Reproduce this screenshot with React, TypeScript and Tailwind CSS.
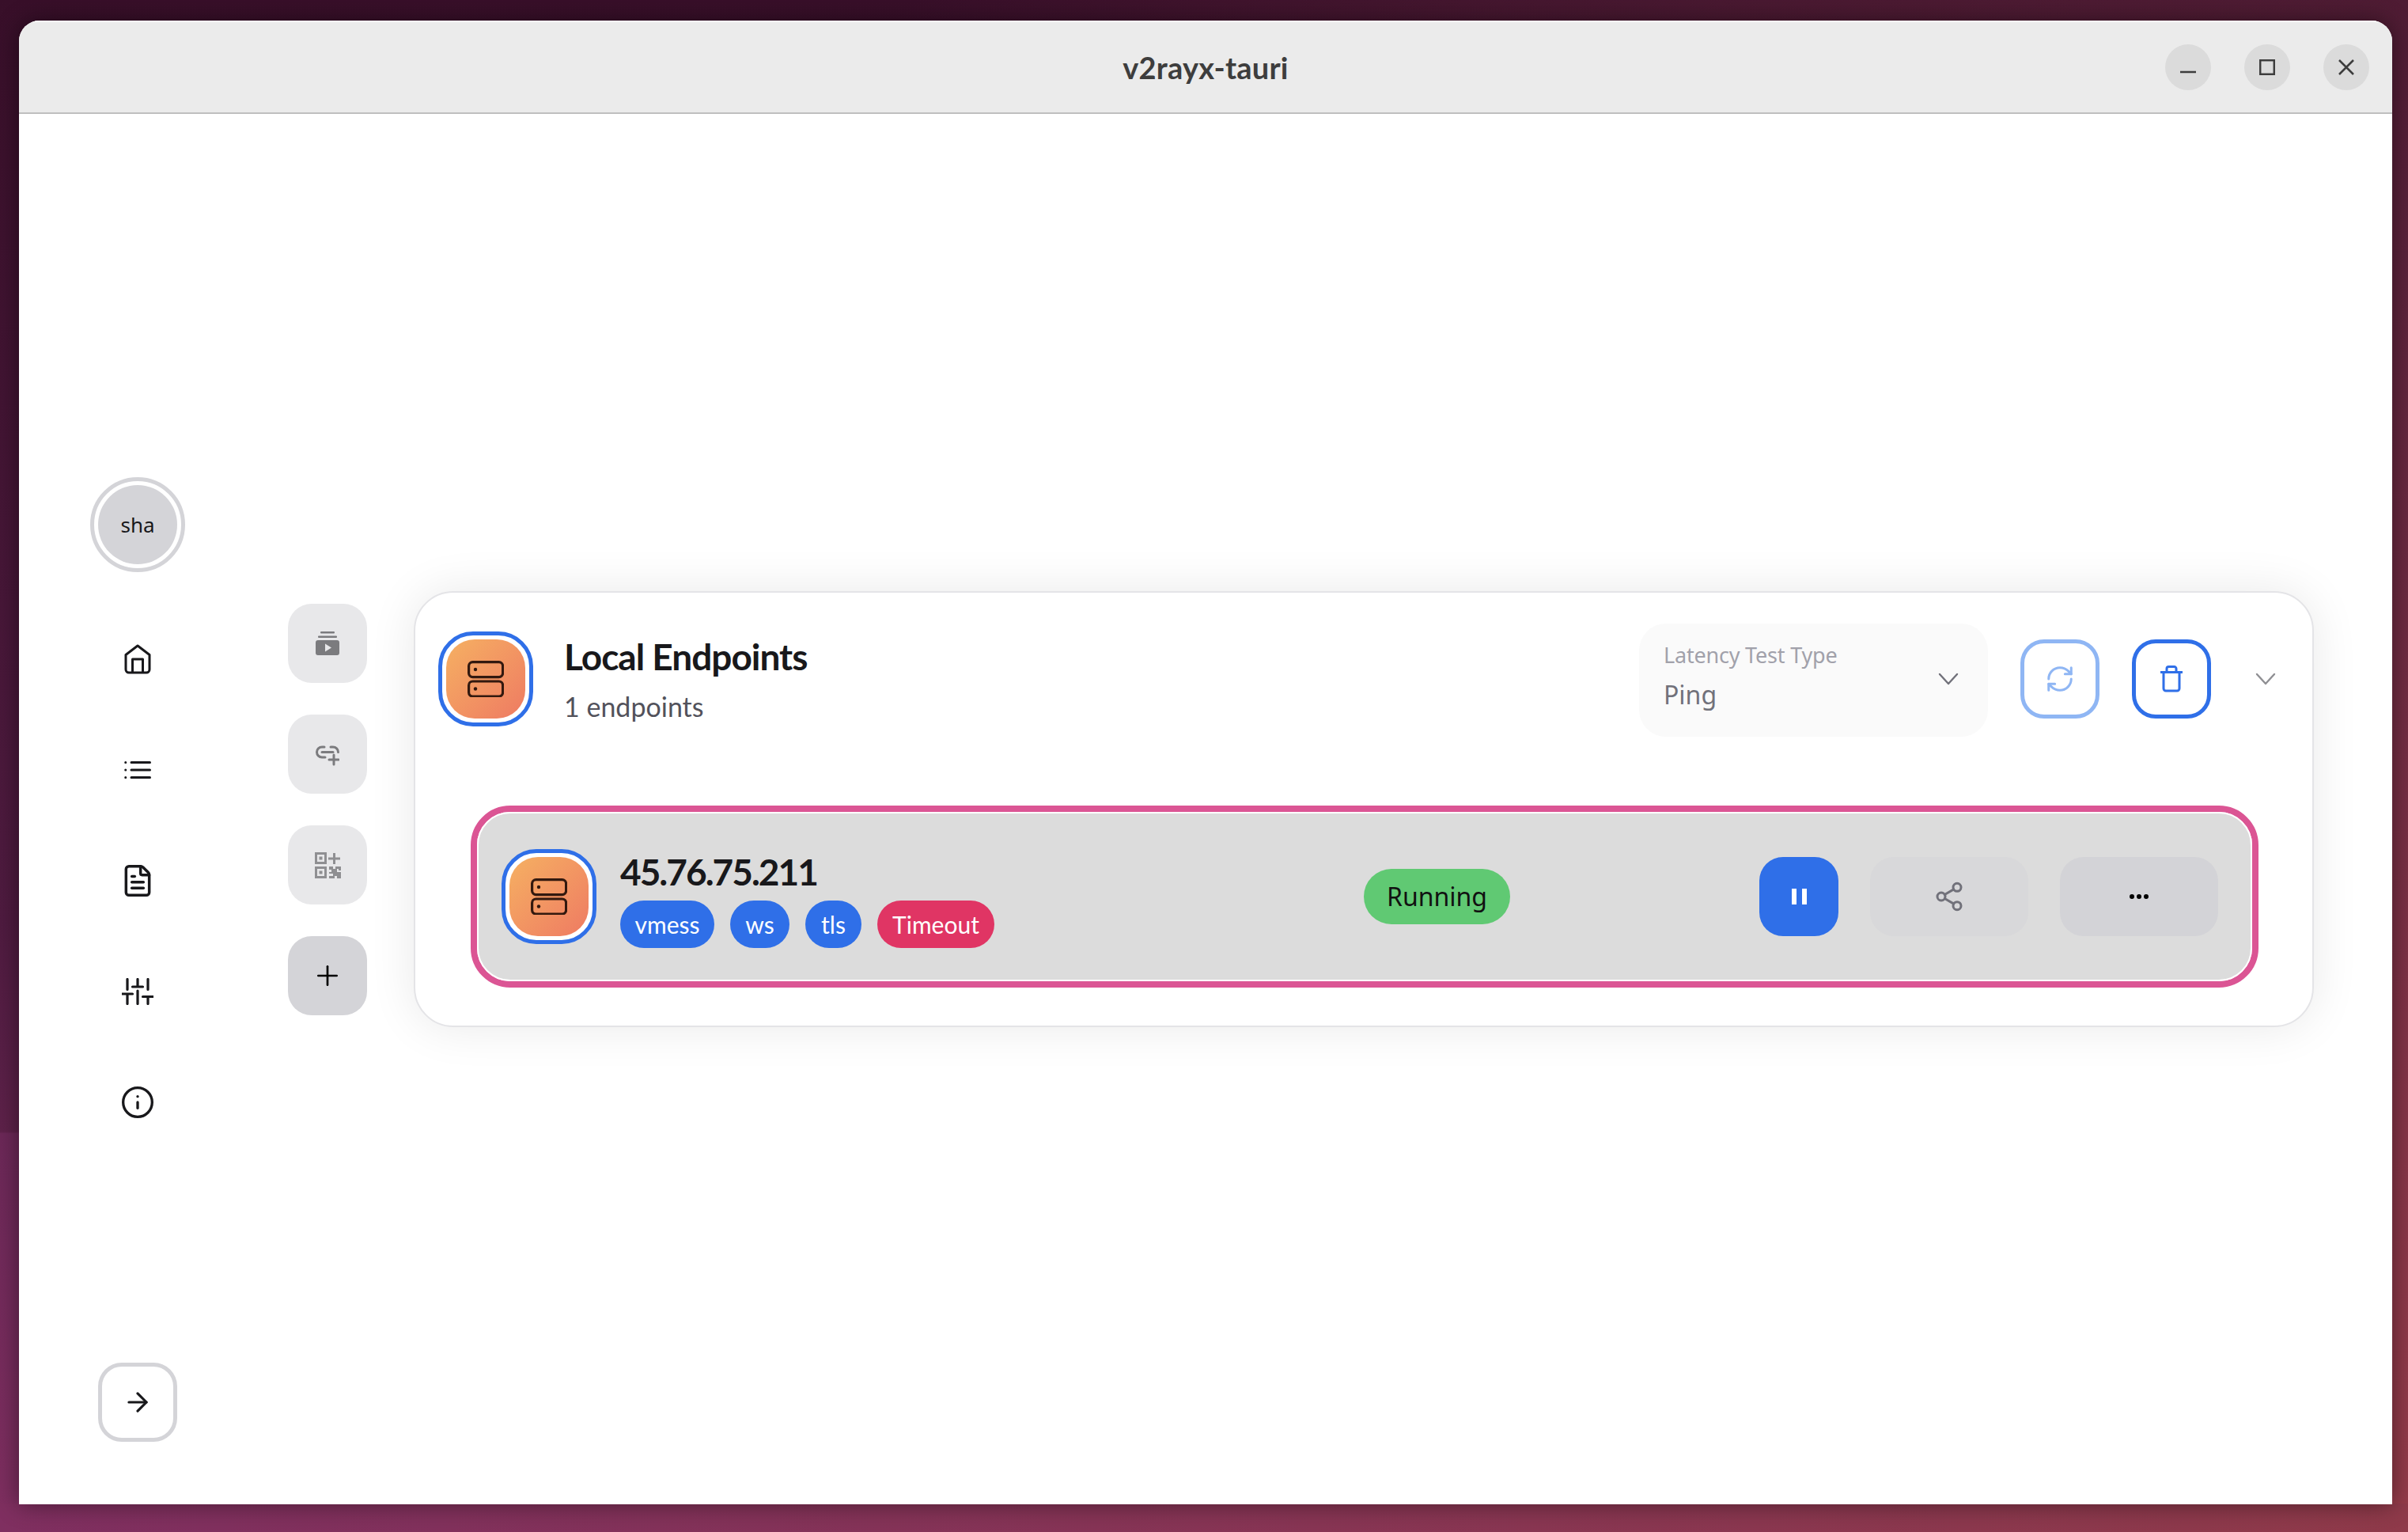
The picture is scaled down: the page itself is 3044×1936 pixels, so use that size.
import { ArrowRight, FileText, Info, Plus, Share2, RefreshCw } from "lucide-react";
import type { ReactNode } from "react";

const Server = () => (
  <svg viewBox="0 0 46 46" fill="none" stroke="#33190f" strokeWidth="3.2" className="h-[46px] w-[46px]">
    <rect x="1.600" y="1.600" width="43" height="19" rx="5" />
    <rect x="1.600" y="26" width="43" height="19" rx="5" />
    <circle cx="10" cy="11" r="2.200" fill="#33190f" stroke="none" />
    <circle cx="10" cy="35.500" r="2.200" fill="#33190f" stroke="none" />
  </svg>
);

const Badge = () => (
  <div className="flex h-[120px] w-[120px] shrink-0 items-center justify-center rounded-[44px] border-[5px] border-[#2f6fe8] bg-white">
    <div className="flex h-[100px] w-[100px] items-center justify-center rounded-[36px] bg-gradient-to-br from-[#f5b062] to-[#ee7a62]">
      <Server />
    </div>
  </div>
);

const Chevron = ({ c }: { c: string }) => (
  <svg viewBox="0 0 26 16" fill="none" stroke="currentColor" strokeWidth="2.400" strokeLinecap="round" strokeLinejoin="round" className={c}>
    <path d="M2 2l11 12L24 2" />
  </svg>
);

const HomeIcon = () => (
  <svg viewBox="0 0 34 38" fill="none" stroke="#18181b" strokeWidth="3" strokeLinejoin="round" className="h-[38px] w-[34px]">
    <path d="M17 2L2 13.500V32a4 4 0 0 0 4 4h22a4 4 0 0 0 4-4V13.500z" />
    <path d="M10.500 36V19h13v17" />
  </svg>
);

const ListIcon = () => (
  <svg viewBox="0 0 34 24" fill="none" stroke="#18181b" strokeWidth="3" strokeLinecap="round" className="h-[24px] w-[34px]">
    <path d="M9 2.500h23.500M9 12h23.500M9 21.500h23.500" />
    <path d="M1.700 2.500h.1M1.700 12h.1M1.700 21.500h.1" />
  </svg>
);

const SlidersIcon = () => (
  <svg viewBox="0 0 40 34" fill="none" stroke="#18181b" strokeWidth="3.200" strokeLinecap="round" className="h-[34px] w-[40px]">
    <path d="M7 1.500v13M7 20v12.500M0.500 20h13" />
    <path d="M20 1.500v9.500M20 16v16.500M13.500 11h13" />
    <path d="M33 1.500v13M33 24v8.500M26.500 23.500h13" />
  </svg>
);

const ArchivePlay = () => (
  <svg viewBox="0 0 30 30" className="h-[30px] w-[30px]" fill="#7b7b7e">
    <rect x="6" y="0" width="18" height="2.600" rx="1" />
    <rect x="3" y="5.500" width="24" height="2.600" rx="1" />
    <path fillRule="evenodd" d="M3 11h24a3 3 0 0 1 3 3v13a3 3 0 0 1-3 3H3a3 3 0 0 1-3-3V14a3 3 0 0 1 3-3zm9 4.500v10l8-5z" />
  </svg>
);

const LinkPlus = () => (
  <svg viewBox="0 0 30 30" className="h-[30px] w-[30px]" fill="none" stroke="#7b7b7e" strokeWidth="3" strokeLinecap="round">
    <path d="M11 6H8a6.500 6.500 0 0 0 0 13h4" />
    <path d="M19 6h3a6.500 6.500 0 0 1 6.500 6.500" />
    <path d="M8 12.500h14" />
    <path d="M23 16v12M17 22h12" />
  </svg>
);

const QrPlus = () => (
  <svg viewBox="0 0 33 33" className="h-[33px] w-[33px]" fill="#8f8f92">
    <path fillRule="evenodd" d="M0 0h15v15H0zM3 3v9h9V3zM5.500 5.500h4v4h-4zM0 18h15v15H0zM3 21v9h9v-9zM5.500 23.500h4v4h-4z" />
    <path d="M23 1h3v5.500h6v3h-6V15h-3V9.500h-6v-3h6z" />
    <path d="M18 18h5v3h3v-3h7v5h-3v-2h-2v4h5v8h-5v-3h-3v3h-7v-3h5v-3h-5v-2h3v-3h-3z" />
  </svg>
);

const Trash = () => (
  <svg viewBox="0 0 30 34" fill="none" stroke="#2f6fe8" strokeWidth="3" strokeLinejoin="round" className="h-[34px] w-[30px]">
    <path d="M1 8.500h28" />
    <path d="M9 8V4a2.500 2.500 0 0 1 2.500-2.500h7A2.500 2.500 0 0 1 21 4v4" />
    <path d="M5 8.500V29a3 3 0 0 0 3 3h14a3 3 0 0 0 3-3V8.500" />
  </svg>
);

const nav = [
  <HomeIcon key="h" />,
  <ListIcon key="l" />,
  <FileText key="f" className="h-[44px] w-[44px] text-[#18181b]" strokeWidth={1.900} />,
  <SlidersIcon key="s" />,
  <Info key="i" className="h-[44px] w-[44px] text-[#18181b]" strokeWidth={1.800} />,
];

const WinBtn = ({ children }: { children: ReactNode }) => (
  <div className="flex h-[58px] w-[58px] items-center justify-center rounded-full bg-[#dbdbdb] text-[#3d3d3d]">{children}</div>
);

const Chip = ({ w, bg, t }: { w: string; bg: string; t: string }) => (
  <span className={`flex h-[60px] items-center justify-center rounded-full text-[30px] text-white ${w} ${bg}`}>{t}</span>
);

export default function App() {
  return (
    <div className="h-[1936px] w-[3044px] overflow-hidden [background:linear-gradient(90deg,#7f2f60,#8f3a4a)_bottom/100%_36px_no-repeat,radial-gradient(ellipse_1200px_506px_at_0%_100%,#7f2f60_0%,#6c2858_99.500%,transparent_100%),radial-gradient(circle_at_100%_100%,rgba(150,60,72,0.95)_0%,rgba(120,50,70,0.5)_45%,transparent_75%),linear-gradient(180deg,#380f29_0%,#4f1b40_60%,#7a2e5c_100%)] pl-[24px] pt-[26px]">
      <div className="flex h-[1875px] w-[3000px] flex-col overflow-hidden rounded-t-[26px] bg-white shadow-[0_0_30px_rgba(0,0,0,0.45)]">
        <header className="relative flex h-[118px] shrink-0 items-center justify-end border-b-[2px] border-t-[2px] border-[#bfbfbf] border-t-white bg-[#ebebeb] pr-[29px]">
          <span className="absolute left-0 right-0 text-center font-['Lato'] text-[38px] font-bold leading-[48px] tracking-[0.2px] text-[#3d3d3d]">v2rayx-tauri</span>
          <div className="relative flex gap-[42px]">
            <WinBtn><svg viewBox="0 0 20 20" className="h-[20px] w-[20px]" stroke="currentColor" strokeWidth="2.500"><path d="M0 16h20" /></svg></WinBtn>
            <WinBtn><svg viewBox="0 0 20 20" className="h-[20px] w-[20px]" fill="none" stroke="currentColor" strokeWidth="2.500"><rect x="1.200" y="1.200" width="17.600" height="17.600" /></svg></WinBtn>
            <WinBtn><svg viewBox="0 0 20 20" className="h-[20px] w-[20px]" stroke="currentColor" strokeWidth="2.500"><path d="M1 1l18 18M19 1L1 19" /></svg></WinBtn>
          </div>
        </header>

        <div className="flex flex-1">
          <aside className="flex w-[300px] shrink-0 flex-col items-center pb-[79px] pt-[459px]">
            <div className="flex h-[120px] w-[120px] items-center justify-center rounded-full border-[5px] border-[#d4d4d8]">
              <div className="flex h-[100px] w-[100px] items-center justify-center rounded-full bg-[#d4d4d8] font-['Noto_Sans'] text-[26px] text-[#18181b]">sha</div>
            </div>
            <nav className="mt-[60px] flex flex-col gap-[40px]">
              {nav.map((n, i) => (
                <div key={i} className="flex h-[100px] w-[100px] items-center justify-center">{n}</div>
              ))}
            </nav>
            <button className="mt-auto flex h-[100px] w-[100px] items-center justify-center rounded-[30px] border-[5px] border-[#d4d4d8]">
              <ArrowRight className="h-[38px] w-[38px] text-[#18181b]" strokeWidth={2} />
            </button>
          </aside>

          <div className="ml-[40px] flex w-[100px] shrink-0 flex-col gap-[40px] pt-[619px]">
            {[<ArchivePlay key="a" />, <LinkPlus key="b" />, <QrPlus key="c" />].map((n, i) => (
              <div key={i} className="flex h-[100px] w-[100px] items-center justify-center rounded-[30px] bg-[#e8e8ea]">{n}</div>
            ))}
            <div className="flex h-[100px] w-[100px] items-center justify-center rounded-[30px] bg-[#d4d4d8]">
              <Plus className="h-[40px] w-[40px] text-black" strokeWidth={1.600} />
            </div>
          </div>

          <div className="ml-[59px] mt-[603px] h-[551px] w-[2402px] rounded-[50px] border-[2px] border-[#e4e4e7] bg-white px-[29px] pt-[49px] shadow-[0_0_60px_rgba(0,0,0,0.09)]">
            <div className="flex h-[120px] items-center">
              <Badge />
              <div className="ml-[39px] flex flex-1 flex-col">
                <span className="font-['Lato'] text-[46px] font-bold leading-[60px] tracking-[-1px] text-[#18181b]">Local Endpoints</span>
                <span className="mt-[9px] font-['Lato'] text-[34px] leading-[48px] text-[#52525b]">1 endpoints</span>
              </div>
              <div className="relative mt-[3px] flex h-[143px] w-[441px] flex-col rounded-[34px] bg-[#fafafa] pl-[31px] pt-[20px] font-['Noto_Sans']">
                <span className="text-[27px] leading-[40px] tracking-[-0.2px] text-[#a1a1aa]">Latency Test Type</span>
                <span className="mt-[6px] text-[32px] leading-[48px] text-[#71717a]">Ping</span>
                <Chevron c="absolute right-[37px] top-[62px] h-[16px] w-[26px] text-[#71717a]" />
              </div>
              <button className="ml-[41px] flex h-[100px] w-[100px] items-center justify-center rounded-[30px] border-[5px] border-[#8fb6f4]">
                <RefreshCw className="h-[38px] w-[38px] text-[#8fb6f4]" strokeWidth={1.900} />
              </button>
              <button className="ml-[41px] flex h-[100px] w-[100px] items-center justify-center rounded-[30px] border-[5px] border-[#2f6fe8]">
                <Trash />
              </button>
              <Chevron c="ml-[56px] mr-[17px] h-[16px] w-[26px] text-[#8f8f93]" />
            </div>

            <div className="ml-[41px] mt-[100px] h-[230px] w-[2260px] rounded-[50px] border-[8px] border-[#db5594]">
              <div className="flex h-full items-center rounded-[42px] border-[2px] border-white bg-[#dcdcdc] pl-[29px] pr-[41px]">
                <Badge />
                <div className="ml-[30px] mt-[9px] flex w-[940px] shrink-0 flex-col">
                  <span className="font-['Lato'] text-[46px] font-bold leading-[50px] tracking-[-2px] text-[#18181b]">45.76.75.211</span>
                  <div className="mt-[11px] flex gap-[20px] font-['Lato']">
                    <Chip w="w-[119px]" bg="bg-[#2f6fe8]" t="vmess" />
                    <Chip w="w-[75px]" bg="bg-[#2f6fe8]" t="ws" />
                    <Chip w="w-[71px]" bg="bg-[#2f6fe8]" t="tls" />
                    <Chip w="w-[148px]" bg="bg-[#e03564]" t="Timeout" />
                  </div>
                </div>
                <span className="flex h-[70px] w-[185px] items-center justify-center rounded-full bg-[#60c973] font-['Noto_Sans'] text-[32px] text-[#111]">Running</span>
                <div className="ml-auto flex gap-[40px]">
                  <button className="flex h-[100px] w-[100px] items-center justify-center gap-[7px] rounded-[30px] bg-[#2f6fe8]">
                    <span className="h-[20px] w-[6px] bg-white" />
                    <span className="h-[20px] w-[6px] bg-white" />
                  </button>
                  <button className="flex h-[100px] w-[200px] items-center justify-center rounded-[30px] bg-[#d8d8da]">
                    <Share2 className="h-[40px] w-[40px] text-[#71717a]" strokeWidth={1.800} />
                  </button>
                  <button className="flex h-[100px] w-[200px] items-center justify-center gap-[3px] rounded-[30px] bg-[#d3d3d7]">
                    <span className="h-[6px] w-[6px] rounded-full bg-black" />
                    <span className="h-[6px] w-[6px] rounded-full bg-black" />
                    <span className="h-[6px] w-[6px] rounded-full bg-black" />
                  </button>
                </div>
              </div>
            </div>
          </div>
        </div>
      </div>
    </div>
  );
}
